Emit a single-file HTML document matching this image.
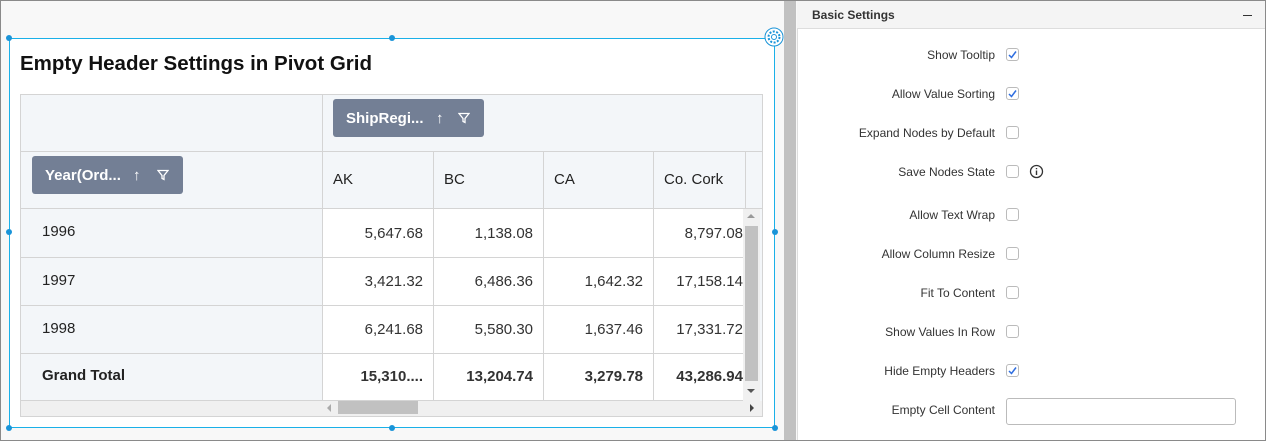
<!DOCTYPE html><html><head><style>
*{box-sizing:border-box;margin:0;padding:0}
body{width:1266px;height:441px;overflow:hidden;font-family:"Liberation Sans",sans-serif;background:#f8f8f8;position:relative}
.a{position:absolute}
.frame{left:0;top:0;width:1266px;height:441px;border:1px solid #8a8a8a;z-index:20;pointer-events:none}
.hd{background:#f3f6f9}
.c{position:absolute;border-right:1px solid #d4d4d4;border-bottom:1px solid #d4d4d4;font-size:15px;color:#222}
.num{text-align:right;padding-right:10px;color:#333;background:#fff}
.chip{position:absolute;background:#737f95;color:#fff;border-radius:3px;font-size:15px;font-weight:bold;height:38px;line-height:38px;padding-left:13px}
.dot{position:absolute;width:6px;height:6px;border-radius:50%;background:#1a94d8}
.lbl{position:absolute;right:271px;font-size:12px;color:#333;text-align:right}
.cb{position:absolute;left:1006px;width:13px;height:13px;border:1px solid #bbb;border-radius:3px;background:#fff}
</style></head><body>
<div class="a frame"></div>
<div class="a" style="left:9px;top:38px;width:766px;height:390px;background:#fff;border:1px solid #1ab0e8"></div>
<div class="dot" style="left:6px;top:35px"></div><div class="dot" style="left:389px;top:35px"></div>
<div class="dot" style="left:6px;top:229px"></div><div class="dot" style="left:772px;top:229px"></div>
<div class="dot" style="left:6px;top:425px"></div><div class="dot" style="left:389px;top:425px"></div><div class="dot" style="left:772px;top:425px"></div>
<svg class="a" style="left:764px;top:26px" width="20" height="22" viewBox="0 0 20 20"><circle cx="10" cy="10" r="9" fill="#fff" stroke="#1a94d8"/><circle cx="10" cy="10" r="2.5" fill="none" stroke="#1a94d8"/><circle cx="10" cy="10" r="5.5" fill="none" stroke="#1a94d8" stroke-dasharray="2 1.5" stroke-width="2"/></svg>
<div class="a" style="left:20px;top:52px;font-size:20.5px;font-weight:bold;color:#111">Empty Header Settings in Pivot Grid</div>
<div class="a" style="left:20px;top:94px;width:743px;height:323px;border:1px solid #d4d4d4;background:#f3f6f9;overflow:hidden">
 <div class="c hd" style="left:0;top:0;width:302px;height:57px"></div>
 <div class="c hd" style="left:302px;top:0;width:440px;height:57px;border-right:none"></div>
 <div class="c hd" style="left:0;top:57px;width:302px;height:57px"></div>
 <div class="c hd" style="left:302px;top:57px;width:111px;height:57px;padding:19px 10px">AK</div>
 <div class="c hd" style="left:413px;top:57px;width:110px;height:57px;padding:19px 10px">BC</div>
 <div class="c hd" style="left:523px;top:57px;width:110px;height:57px;padding:19px 10px">CA</div>
 <div class="c hd" style="left:633px;top:57px;width:92px;height:57px;padding:19px 10px">Co. Cork</div>
 <div class="c hd" style="left:725px;top:57px;width:20px;height:57px;border-right:none"></div>
 <div class="c hd" style="left:0;top:114px;width:302px;height:49px;padding:14px 21px">1996</div>
 <div class="c hd" style="left:0;top:163px;width:302px;height:48px;padding:14px 21px">1997</div>
 <div class="c hd" style="left:0;top:211px;width:302px;height:48px;padding:14px 21px">1998</div>
 <div class="c hd" style="left:0;top:259px;width:302px;height:47px;padding:13px 21px;font-weight:bold">Grand Total</div>
 <div class="c num" style="left:302px;top:114px;width:111px;height:49px;padding-top:16px">5,647.68</div>
 <div class="c num" style="left:413px;top:114px;width:110px;height:49px;padding-top:16px">1,138.08</div>
 <div class="c num" style="left:523px;top:114px;width:110px;height:49px;padding-top:16px"></div>
 <div class="c num" style="left:633px;top:114px;width:92px;height:49px;padding-top:16px;padding-right:3px;border-right:none">8,797.08</div>
 <div class="c num" style="left:302px;top:163px;width:111px;height:48px;padding-top:15px">3,421.32</div>
 <div class="c num" style="left:413px;top:163px;width:110px;height:48px;padding-top:15px">6,486.36</div>
 <div class="c num" style="left:523px;top:163px;width:110px;height:48px;padding-top:15px">1,642.32</div>
 <div class="c num" style="left:633px;top:163px;width:92px;height:48px;padding-top:15px;padding-right:3px;border-right:none">17,158.14</div>
 <div class="c num" style="left:302px;top:211px;width:111px;height:48px;padding-top:15px">6,241.68</div>
 <div class="c num" style="left:413px;top:211px;width:110px;height:48px;padding-top:15px">5,580.30</div>
 <div class="c num" style="left:523px;top:211px;width:110px;height:48px;padding-top:15px">1,637.46</div>
 <div class="c num" style="left:633px;top:211px;width:92px;height:48px;padding-top:15px;padding-right:3px;border-right:none">17,331.72</div>
 <div class="c num" style="left:302px;top:259px;width:111px;height:47px;padding-top:14px;font-weight:bold">15,310....</div>
 <div class="c num" style="left:413px;top:259px;width:110px;height:47px;padding-top:14px;font-weight:bold">13,204.74</div>
 <div class="c num" style="left:523px;top:259px;width:110px;height:47px;padding-top:14px;font-weight:bold">3,279.78</div>
 <div class="c num" style="left:633px;top:259px;width:92px;height:47px;padding-top:14px;padding-right:3px;font-weight:bold;border-right:none">43,286.94</div>
 <div class="a" style="left:722px;top:114px;width:17px;height:192px;background:#f0f0f0"></div>
 <div class="a" style="left:724px;top:131px;width:13px;height:155px;background:#c1c1c1"></div>
 <div class="a" style="left:726px;top:119px;width:0;height:0;border:4px solid transparent;border-bottom:4px solid #999;border-top:none"></div>
 <div class="a" style="left:726px;top:294px;width:0;height:0;border:4px solid transparent;border-top:4px solid #555;border-bottom:none"></div>
 <div class="a" style="left:0;top:306px;width:742px;height:16px;background:#f0f0f0"></div>
 <div class="a" style="left:317px;top:306px;width:80px;height:13px;background:#c1c1c1"></div>
 <div class="a" style="left:306px;top:309px;border:4px solid transparent;border-right:4px solid #aaa;border-left:none"></div>
 <div class="a" style="left:729px;top:309px;border:4px solid transparent;border-left:4px solid #444;border-right:none"></div>
</div>
<div class="chip" style="left:333px;top:99px;width:151px;line-height:39px">ShipRegi...<span style="position:absolute;left:103px">↑</span><svg style="position:absolute;left:125px;top:13px" width="12" height="12" viewBox="0 0 12 12"><path d="M1 1.5h10L7 6.5v4L5 9.5v-3z" fill="none" stroke="#fff" stroke-width="1.3"/></svg></div>
<div class="chip" style="left:32px;top:156px;width:151px;line-height:39px">Year(Ord...<span style="position:absolute;left:101px">↑</span><svg style="position:absolute;left:125px;top:13px" width="12" height="12" viewBox="0 0 12 12"><path d="M1 1.5h10L7 6.5v4L5 9.5v-3z" fill="none" stroke="#fff" stroke-width="1.3"/></svg></div>
<div class="a" style="left:784px;top:0;width:12px;height:441px;background:#c1c1c1"></div>
<div class="a" style="left:797px;top:0;width:469px;height:441px;background:#fff;border-left:1px solid #ddd"></div>
<div class="a" style="left:797px;top:0;width:469px;height:29px;background:#f4f4f4;border-bottom:1px solid #ddd"></div>
<div class="a" style="left:812px;top:8px;font-size:12px;font-weight:bold;color:#333">Basic Settings</div>
<div class="a" style="left:1243px;top:15px;width:9px;height:1px;background:#333"></div>
<div class="lbl" style="top:48px">Show Tooltip</div><div class="cb" style="top:48px"></div>
<div class="lbl" style="top:87px">Allow Value Sorting</div><div class="cb" style="top:87px"></div>
<div class="lbl" style="top:126px">Expand Nodes by Default</div><div class="cb" style="top:126px"></div>
<div class="lbl" style="top:165px">Save Nodes State</div><div class="cb" style="top:165px"></div>
<svg class="a" style="left:1029px;top:164px" width="15" height="15" viewBox="0 0 15 15"><circle cx="7.5" cy="7.5" r="6" fill="none" stroke="#333" stroke-width="1.3"/><path d="M7.5 6.5v4.5M7.5 4v1.2" stroke="#333" stroke-width="1.4"/></svg>
<div class="lbl" style="top:208px">Allow Text Wrap</div><div class="cb" style="top:208px"></div>
<div class="lbl" style="top:247px">Allow Column Resize</div><div class="cb" style="top:247px"></div>
<div class="lbl" style="top:286px">Fit To Content</div><div class="cb" style="top:286px"></div>
<div class="lbl" style="top:325px">Show Values In Row</div><div class="cb" style="top:325px"></div>
<div class="lbl" style="top:364px">Hide Empty Headers</div><div class="cb" style="top:364px"></div>
<div class="lbl" style="top:403px">Empty Cell Content</div>
<div class="a" style="left:1006px;top:398px;width:230px;height:27px;border:1px solid #bbb;border-radius:3px"></div>
<svg class="a" style="left:1006px;top:48px" width="13" height="13"><path d="M3 7l2.5 2.5L10 3.5" fill="none" stroke="#2f6ee0" stroke-width="1.5"/></svg>
<svg class="a" style="left:1006px;top:87px" width="13" height="13"><path d="M3 7l2.5 2.5L10 3.5" fill="none" stroke="#2f6ee0" stroke-width="1.5"/></svg>
<svg class="a" style="left:1006px;top:364px" width="13" height="13"><path d="M3 7l2.5 2.5L10 3.5" fill="none" stroke="#2f6ee0" stroke-width="1.5"/></svg>
</body></html>
